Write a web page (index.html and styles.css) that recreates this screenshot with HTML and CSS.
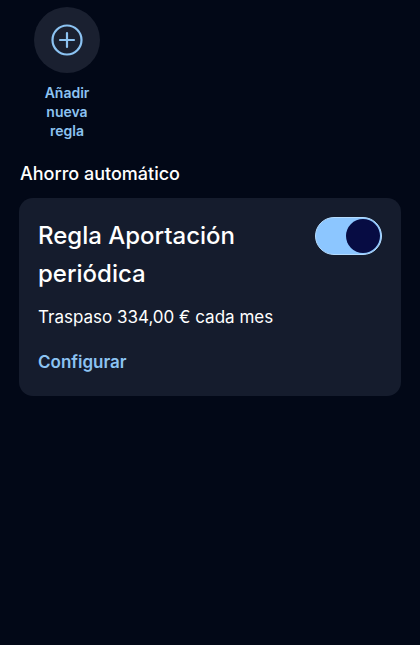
FILE: index.html
```html
<!DOCTYPE html>
<html lang="es">
<head>
<meta charset="utf-8">
<link rel="stylesheet" href="styles.css">
</head>
<body>
<main class="screen">
  <div class="add-rule">
    <div class="add-circle">
      <svg width="32" height="32" viewBox="0 0 32 32" fill="none" stroke="#8cc3f2" stroke-width="2.2" stroke-linecap="round">
        <circle cx="16" cy="16" r="14.5"/>
        <path d="M16 9v14M9 16h14"/>
      </svg>
    </div>
    <div class="add-label">Añadir<br>nueva<br>regla</div>
  </div>
  <h2 class="section-title">Ahorro automático</h2>
  <section class="card">
    <div class="card-head">
      <h3 class="card-title">Regla Aportación periódica</h3>
      <div class="toggle"><div class="knob"></div></div>
    </div>
    <p class="card-desc">Traspaso 334,00 € cada mes</p>
    <a class="card-link">Configurar</a>
  </section>
</main>
</body>
</html>
```
FILE: styles.css
```css
html, body {
  margin: 0;
  padding: 0;
  background: #020817;
  font-family: Inter, "Open Sans", sans-serif;
  color: #ffffff;
}
.screen {
  width: 420px;
  height: 645px;
  padding: 7px 19px 0;
  box-sizing: border-box;
}
.add-rule {
  width: 96px;
  display: flex;
  flex-direction: column;
  align-items: center;
}
.add-circle {
  width: 66px;
  height: 66px;
  border-radius: 50%;
  background: #1a2030;
  display: flex;
  align-items: center;
  justify-content: center;
}
.add-label {
  margin-top: 10px;
  text-align: center;
  color: #8cc3f2;
  font-size: 14px;
  font-weight: 600;
  line-height: 19px;
}
.section-title {
  margin: 22px 0 0 1px;
  font-size: 18px;
  font-weight: 500;
  line-height: 24px;
}
.card {
  margin-top: 12px;
  background: #151c2d;
  border-radius: 14px;
  padding: 19px 19px 22px;
}
.card-head {
  display: flex;
  justify-content: space-between;
  align-items: flex-start;
}
.card-title {
  margin: 0;
  width: 230px;
  font-size: 24px;
  font-weight: 500;
  line-height: 38px;
}
.toggle {
  width: 67px;
  height: 38px;
  box-sizing: border-box;
  border-radius: 19px;
  background: #8cc6ff;
  border: 1px solid #b5dcff;
  display: flex;
  justify-content: flex-end;
  align-items: center;
  padding: 1px;
}
.knob {
  width: 34px;
  height: 34px;
  border-radius: 50%;
  background: #070c43;
}
.card-desc {
  margin: 12px 0 0;
  font-size: 17px;
  line-height: 24px;
  font-weight: 400;
}
.card-link {
  display: block;
  margin-top: 21px;
  color: #8cc3f2;
  font-size: 17px;
  font-weight: 600;
  line-height: 24px;
}
```
